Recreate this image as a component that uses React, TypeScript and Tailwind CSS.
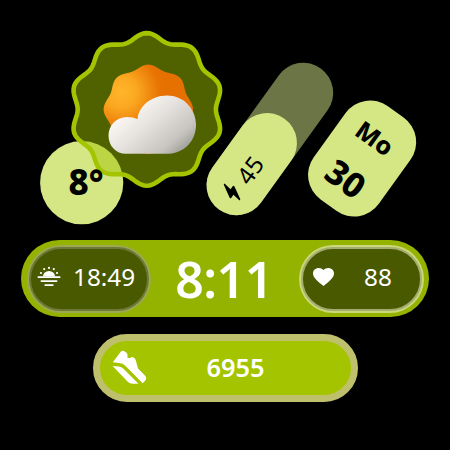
const scallop = (cx: number, cy: number, radius: number, depth: number, lobes: number) => {
  const points: string[] = [];
  for (let deg = 0; deg < 360; deg += 2) {
    const a = (deg * Math.PI) / 180;
    const r = radius + depth * Math.cos(lobes * a);
    points.push(`${(cx + r * Math.sin(a)).toFixed(2)} ${(cy - r * Math.cos(a)).toFixed(2)}`);
  }
  return `M${points.join("L")}Z`;
};

const badgePath = scallop(109.8, 82.4, 72.7, 3.6, 10);
const sunPath = scallop(111.3, 82.3, 42.8, 1.9, 8);

const WeatherBadge = () => (
  <svg className="absolute left-[37px] top-[27px] h-[200px] w-[190px]" viewBox="0 0 190 200">
    <defs>
      <radialGradient id="sun" gradientUnits="userSpaceOnUse" cx="84" cy="65" r="45">
        <stop offset="0" stopColor="#ffb52a" />
        <stop offset="0.35" stopColor="#fba821" />
        <stop offset="0.85" stopColor="#e87403" />
        <stop offset="1" stopColor="#e67000" />
      </radialGradient>
      <linearGradient id="cloud" gradientUnits="userSpaceOnUse" x1="98" y1="76" x2="144" y2="130">
        <stop offset="0" stopColor="#fcf7f2" />
        <stop offset="0.35" stopColor="#e5e2df" />
        <stop offset="0.75" stopColor="#c8c5c0" />
        <stop offset="1" stopColor="#959893" />
      </linearGradient>
      <clipPath id="badge">
        <path d={badgePath} />
      </clipPath>
    </defs>
    <circle cx="44.7" cy="155.7" r="41.6" fill="#d5e785" />
    <path d={badgePath} fill="#506200" />
    <circle cx="44.7" cy="155.7" r="41.6" fill="#bbd545" clipPath="url(#badge)" />
    <path d={badgePath} fill="none" stroke="#a4c400" strokeWidth="4.6" />
    <path d={sunPath} fill="url(#sun)" />
    <path
      d="M89 126.8H130C147 126.8 159 114 159 98C159 81 146 68.5 130 68.5C114 68.5 101.5 79.5 100.5 92.3C97.5 90.7 94 90 90 90C79 90 71.5 98.5 71.5 108.5C71.5 119 79 126.8 89 126.8Z"
      fill="url(#cloud)"
    />
  </svg>
);

const Battery = () => (
  <div className="absolute left-[239.5px] top-[52.3px] flex h-[173.6px] w-[60px] rotate-[35.8deg] items-end rounded-full bg-[#6b7545]">
    <div className="relative h-[111.8px] w-full rounded-full bg-[#d5e785]" />
  </div>
);

const BatteryLabel = () => (
  <>
    <svg className="absolute left-[218px] top-[178px] h-7 w-7 -rotate-[54deg]" viewBox="0 0 24 24">
      <path d="M13 2.5H14.2L13.2 9.6H16.6Q17.6 9.8 17.1 10.8L11.1 21.5H9.8L10.8 14.4H7.5Q6.4 14.2 6.9 13.2Z" fill="#000" />
    </svg>
    <span className="absolute left-[230px] top-[154.5px] w-10 -rotate-[54deg] text-center text-[24px] leading-[30px] text-black">
      45
    </span>
  </>
);

const DateCard = () => (
  <div className="absolute left-[321.7px] top-[100.8px] flex h-[115.4px] w-[80px] rotate-[35.8deg] flex-col items-center rounded-[30.3px] bg-[#d5e785] pr-[3px] pt-[19px] text-black">
    <span className="text-[25px] font-extrabold leading-[28px]">Mo</span>
    <span className="mt-[18px] text-[34.5px] font-extrabold leading-[36px]">30</span>
  </div>
);

const SunsetIcon = () => (
  <svg className="h-[22px] w-6 shrink-0" viewBox="0 0 24 22" fill="#fff">
    <path d="M6 10.5A6 5.6 0 0 1 18 10.5Z" />
    <rect x="0.5" y="10.3" width="23" height="1.7" rx="0.8" />
    <rect x="3.5" y="14.2" width="17" height="1.7" rx="0.8" />
    <rect x="7.3" y="18.2" width="9.4" height="1.7" rx="0.8" />
    <circle cx="12" cy="1.9" r="1.1" />
    <circle cx="7.2" cy="3.1" r="1.1" />
    <circle cx="16.8" cy="3.1" r="1.1" />
    <circle cx="4" cy="7" r="1.1" />
    <circle cx="20" cy="7" r="1.1" />
  </svg>
);

const HeartIcon = () => (
  <svg className="h-[18px] w-[21px] shrink-0" viewBox="2 3 20 18.35" preserveAspectRatio="none" fill="#fff">
    <path d="M12 21.35l-1.45-1.32C5.4 15.36 2 12.28 2 8.5 2 5.42 4.42 3 7.5 3c1.74 0 3.41.81 4.5 2.09C13.09 3.81 14.76 3 16.5 3 19.58 3 22 5.42 22 8.5c0 3.78-3.4 6.86-8.55 11.54L12 21.35z" />
  </svg>
);

const ShoeIcon = () => (
  <svg className="h-[35px] w-[35px] shrink-0" viewBox="0 0 35 35" fill="#fff">
    <path d="M0.8 12.3L8.5 2Q10.3-.2 12.5 1.2L14.5 2.7Q16 3.8 15.4 7.7Q18 8.8 19.5 6.9Q22.5 7 23.7 10L26 18.5L33 25.5Q35.6 28.5 32.7 31.2L30.6 33.2L13.6 16Q11 13.2 7 13Z" />
    <path d="M0.6 16L7 16.5Q9.5 16.8 11.5 18.8L26.5 33.7H20.5Q18 33.7 16 32Z" />
  </svg>
);

const App = () => {
  return (
    <main className="relative flex h-[450px] w-[450px] flex-col items-center overflow-hidden bg-black font-['Noto_Sans',sans-serif] text-white">
      <section className="relative h-[240px] w-full shrink-0">
        <WeatherBadge />
        <span className="absolute left-[68.5px] top-[160px] text-[35px] font-extrabold leading-[44px] text-black">8°</span>
        <Battery />
        <BatteryLabel />
        <DateCard />
      </section>

      <section className="flex h-[77px] w-[408px] shrink-0 items-center justify-between rounded-full bg-[#94b200] pl-[6px] pr-[5px]">
        <div className="h-[68px] w-[124px] rounded-full bg-[#9ca951] p-[2px]">
          <div className="flex h-full items-center rounded-full border-2 border-[#6f7937] bg-[#495900] pb-[4px] pl-[6px]">
            <SunsetIcon />
            <span className="ml-[12px] text-[24.3px] leading-[34px]">18:49</span>
          </div>
        </div>
        <time className="-ml-[2px] text-[50px] font-semibold leading-[70px] tracking-[-0.5px]">8:11</time>
        <div className="h-[68px] w-[125px] rounded-full bg-[#cad878] p-[2px]">
          <div className="flex h-full items-center rounded-full border-2 border-[#a4ac70] bg-[#495900] pb-[4px] pl-[10px]">
            <HeartIcon />
            <span className="ml-[30px] text-[24.3px] leading-[34px]">88</span>
          </div>
        </div>
      </section>

      <section className="mt-[17px] flex h-[68px] w-[265px] shrink-0 items-center rounded-full border-[7px] border-[#bfc06c] bg-[#a4c400] pb-[2px] pl-[12px]">
        <ShoeIcon />
        <span className="ml-[60px] text-[25.4px] font-semibold leading-[34px]">6955</span>
      </section>
    </main>
  );
};

export default App;
